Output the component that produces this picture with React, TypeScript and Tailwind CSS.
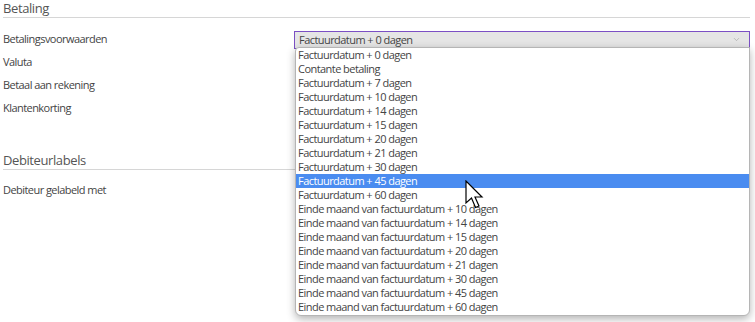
import { ChevronDown } from 'lucide-react';

const options = [
  'Factuurdatum + 0 dagen',
  'Contante betaling',
  'Factuurdatum + 7 dagen',
  'Factuurdatum + 10 dagen',
  'Factuurdatum + 14 dagen',
  'Factuurdatum + 15 dagen',
  'Factuurdatum + 20 dagen',
  'Factuurdatum + 21 dagen',
  'Factuurdatum + 30 dagen',
  'Factuurdatum + 45 dagen',
  'Factuurdatum + 60 dagen',
  'Einde maand van factuurdatum + 10 dagen',
  'Einde maand van factuurdatum + 14 dagen',
  'Einde maand van factuurdatum + 15 dagen',
  'Einde maand van factuurdatum + 20 dagen',
  'Einde maand van factuurdatum + 21 dagen',
  'Einde maand van factuurdatum + 30 dagen',
  'Einde maand van factuurdatum + 45 dagen',
  'Einde maand van factuurdatum + 60 dagen',
];

export default function App() {
  return (
    <div className="relative w-[755px] h-[322px] bg-white text-[11px] tracking-[-0.55px] text-[#444] overflow-hidden" style={{ fontFamily: '"Open Sans", sans-serif' }}>
      {/* Betaling */}
      <SectionHeader title="Betaling" />
      <div className="mt-[10px] flex flex-col">
        <Row label="Betalingsvoorwaarden">
          <div className="w-[456px] h-[18px] border border-[#7b4fc4] bg-[#e5e5e5] flex items-center justify-between pl-[4px] pr-[8px] leading-[14px]">
            <span>Factuurdatum + 0 dagen</span>
            <ChevronDown className="w-[9px] h-[9px] text-[#999]" strokeWidth={1.5} />
          </div>
        </Row>
        <Row label="Valuta" />
        <Row label="Betaal aan rekening" />
        <Row label="Klantenkorting" />
      </div>

      {/* Debiteurlabels */}
      <div className="mt-[32px]">
        <SectionHeader title="Debiteurlabels" />
      </div>
      <div className="mt-[9px]">
        <Row label="Debiteur gelabeld met" />
      </div>

      {/* Open dropdown list */}
      <div className="absolute left-[295px] top-[47px] w-[455px] bg-white border border-[#b5b5b5] rounded-b-[6px] rounded-tl-[4px] shadow-[0_3px_8px_rgba(0,0,0,0.3)] pb-[1px]">
        {options.map((o, i) => (
          <div
            key={i}
            className={
              i === 9
                ? 'h-[14px] leading-[14px] pl-[2px] bg-[#4a8cf0] text-white'
                : 'h-[14px] leading-[14px] pl-[2px]'
            }
          >
            {o}
          </div>
        ))}
      </div>

      {/* Mouse cursor */}
      <svg className="absolute left-[465px] top-[180px]" width="20" height="30" viewBox="0 0 20 30">
        <path d="M1 1 L1 23 L6.5 18 L10.5 27.5 L14 26 L10 17 L17 17 Z" fill="white" stroke="black" strokeWidth="1.2" strokeLinejoin="miter" />
      </svg>
    </div>
  );
}

function SectionHeader({ title }: { title: string }) {
  return (
    <div className="ml-[3px] mr-[5px] h-[18px] border-b border-[#d6d6d6] text-[13px] tracking-[-0.4px] leading-[16px] text-[#555]">
      {title}
    </div>
  );
}

function Row({ label, children }: { label: string; children?: React.ReactNode }) {
  return (
    <div className="h-[23px] flex items-center">
      <div className="w-[294px] pl-[3px]">{label}</div>
      {children}
    </div>
  );
}
